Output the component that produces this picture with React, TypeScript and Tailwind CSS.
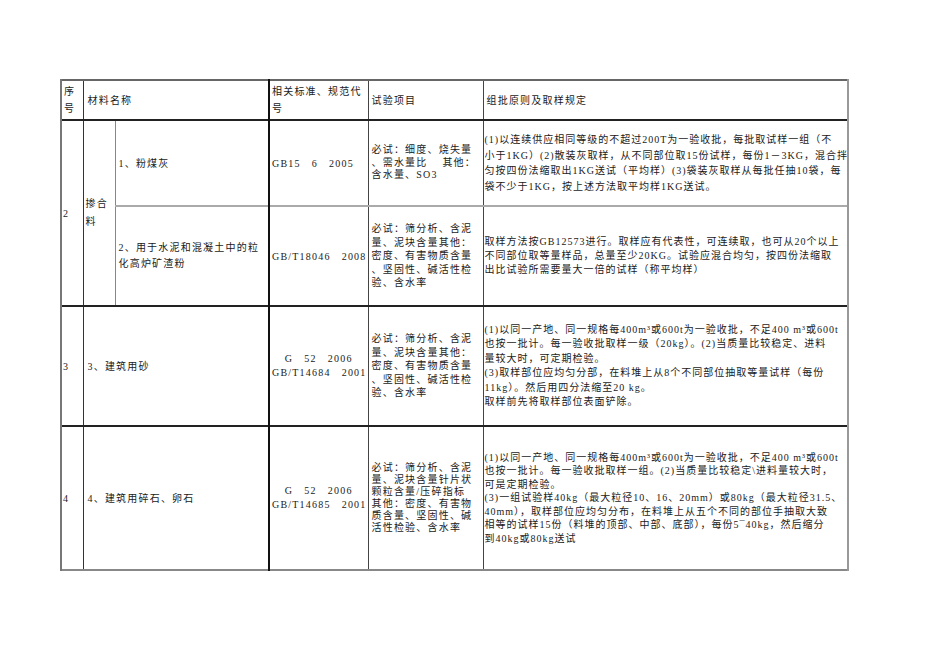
import React from 'react';

const font = '"Liberation Serif", "Noto Sans CJK SC", serif';

const Lines: React.FC<{ lines: string[]; className?: string }> = ({ lines, className }) => (
    <div className={className}>
        {lines.map((l, i) => (
            <div key={i} className="whitespace-pre">{l}</div>
        ))}
    </div>
);

const sandTests = ['必试：筛分析、含泥', '量、泥块含量其他：', '密度、有害物质含量', '、坚固性、碱活性检', '验、含水率'];

const App: React.FC = () => {
    return (
        <div className="w-[950px] h-[672px] bg-white text-[#1a1a1a] text-[10px] tracking-[1.2px]" style={{ fontFamily: font }}>
            <div className="pt-[79px] pl-[60px]">
                <table className="border-collapse table-fixed w-[787px]">
                    <colgroup>
                        <col className="w-[22px]" />
                        <col className="w-[32px]" />
                        <col className="w-[154px]" />
                        <col className="w-[99px]" />
                        <col className="w-[115px]" />
                        <col className="w-[365px]" />
                    </colgroup>
                    <tbody>
                        {/* header */}
                        <tr className="h-[40px] border-t-2 border-t-[#666] border-b-2 border-b-[#222]">
                            <td className="border-l-2 border-l-[#777] border-r border-r-[#333] px-[2px] align-middle leading-[17px]">
                                <div>序</div>
                                <div>号</div>
                            </td>
                            <td colSpan={2} className="border-r-2 border-r-[#111] px-[4px] align-middle">材料名称</td>
                            <td className="border-r border-r-[#444] px-[2px] align-middle leading-[17px]">
                                <div>相关标准、规范代</div>
                                <div>号</div>
                            </td>
                            <td className="border-r border-r-[#444] px-[3px] align-middle">试验项目</td>
                            <td className="border-r-2 border-r-[#999] px-[3px] align-middle">组批原则及取样规定</td>
                        </tr>

                        {/* row 2a */}
                        <tr className="h-[86px] border-b-2 border-b-[#aaa]">
                            <td rowSpan={2} className="border-l-2 border-l-[#777] border-r border-r-[#333] pl-[1px] align-middle">2</td>
                            <td rowSpan={2} className="border-r border-r-[#888] px-[2px] align-middle leading-[18px]">
                                <div>掺合</div>
                                <div>料</div>
                            </td>
                            <td className="border-r-2 border-r-[#111] px-[3px] align-middle">1、粉煤灰</td>
                            <td className="border-r border-r-[#444] px-[2px] align-middle whitespace-pre">GB15   6   2005</td>
                            <td className="border-r border-r-[#444] px-[3px] align-middle">
                                <Lines className="leading-[12.5px]" lines={['必试：细度、烧失量', '、需水量比　 其他：', '含水量、SO3']} />
                            </td>
                            <td className="border-r-2 border-r-[#999] px-[1px] align-middle tracking-[1px]">
                                <Lines
                                    className="leading-[15.5px]"
                                    lines={[
                                        '(1)以连续供应相同等级的不超过200T为一验收批，每批取试样一组（不',
                                        '小于1KG）(2)散装灰取样，从不同部位取15份试样，每份1－3KG，混合拌',
                                        '匀按四份法缩取出1KG送试（平均样）(3)袋装灰取样从每批任抽10袋，每',
                                        '袋不少于1KG，按上述方法取平均样1KG送试。',
                                    ]}
                                />
                            </td>
                        </tr>

                        {/* row 2b */}
                        <tr className="h-[100px] border-b-2 border-b-[#222]">
                            <td className="border-r-2 border-r-[#111] px-[3px] align-middle">
                                <Lines className="leading-[16px]" lines={['2、用于水泥和混凝土中的粒', '化高炉矿渣粉']} />
                            </td>
                            <td className="border-r border-r-[#444] px-[2px] align-middle whitespace-pre">GB/T18046   2008</td>
                            <td className="border-r border-r-[#444] px-[3px] align-middle">
                                <Lines className="leading-[13.5px]" lines={sandTests} />
                            </td>
                            <td className="border-r-2 border-r-[#999] px-[1px] align-middle tracking-[1px]">
                                <Lines
                                    className="leading-[14px]"
                                    lines={[
                                        '取样方法按GB12573进行。取样应有代表性，可连续取，也可从20个以上',
                                        '不同部位取等量样品，总量至少20KG。试验应混合均匀，按四份法缩取',
                                        '出比试验所需要量大一倍的试样（称平均样）',
                                    ]}
                                />
                            </td>
                        </tr>

                        {/* row 3 */}
                        <tr className="h-[120px] border-b-2 border-b-[#222]">
                            <td className="border-l-2 border-l-[#777] border-r border-r-[#333] pl-[1px] align-middle">3</td>
                            <td colSpan={2} className="border-r-2 border-r-[#111] px-[4px] align-middle">3、建筑用砂</td>
                            <td className="border-r border-r-[#444] px-[2px] align-middle text-center">
                                <Lines className="leading-[14px]" lines={['G   52   2006', 'GB/T14684   2001']} />
                            </td>
                            <td className="border-r border-r-[#444] px-[3px] align-middle">
                                <Lines className="leading-[13.5px]" lines={sandTests} />
                            </td>
                            <td className="border-r-2 border-r-[#999] px-[1px] align-middle tracking-[1px]">
                                <Lines
                                    className="leading-[14.5px]"
                                    lines={[
                                        '(1)以同一产地、同一规格每400m³或600t为一验收批，不足400 m³或600t',
                                        '也按一批计。每一验收批取样一级（20kg）。(2)当质量比较稳定、进料',
                                        '量较大时，可定期检验。',
                                        '(3)取样部位应均匀分部，在料堆上从8个不同部位抽取等量试样（每份',
                                        '11kg）。然后用四分法缩至20 kg。',
                                        '取样前先将取样部位表面铲除。',
                                    ]}
                                />
                            </td>
                        </tr>

                        {/* row 4 */}
                        <tr className="h-[144px] border-b-2 border-b-[#888]">
                            <td className="border-l-2 border-l-[#777] border-r border-r-[#333] pl-[1px] align-middle">4</td>
                            <td colSpan={2} className="border-r-2 border-r-[#111] px-[4px] align-middle">4、建筑用碎石、卵石</td>
                            <td className="border-r border-r-[#444] px-[2px] align-middle text-center">
                                <Lines className="leading-[14px]" lines={['G   52   2006', 'GB/T14685   2001']} />
                            </td>
                            <td className="border-r border-r-[#444] px-[3px] align-middle">
                                <Lines
                                    className="leading-[12px]"
                                    lines={['必试：筛分析、含泥', '量、泥块含量针片状', '颗粒含量/压碎指标', '其他：密度、有害物', '质含量、坚固性、碱', '活性检验、含水率']}
                                />
                            </td>
                            <td className="border-r-2 border-r-[#999] px-[1px] align-middle tracking-[1px]">
                                <Lines
                                    className="leading-[13.5px]"
                                    lines={[
                                        '(1)以同一产地、同一规格每400m³或600t为一验收批，不足400 m³或600t',
                                        '也按一批计。每一验收批取样一组。(2)当质量比较稳定\\进料量较大时，',
                                        '可是定期检验。',
                                        '(3)一组试验样40kg（最大粒径10、16、20mm）或80kg（最大粒径31.5、',
                                        '40mm），取样部位应均匀分布，在料堆上从五个不同的部位手抽取大致',
                                        '相等的试样15份（料堆的顶部、中部、底部），每份5¯40kg，然后缩分',
                                        '到40kg或80kg送试',
                                    ]}
                                />
                            </td>
                        </tr>
                    </tbody>
                </table>
            </div>
        </div>
    );
};

export default App;
